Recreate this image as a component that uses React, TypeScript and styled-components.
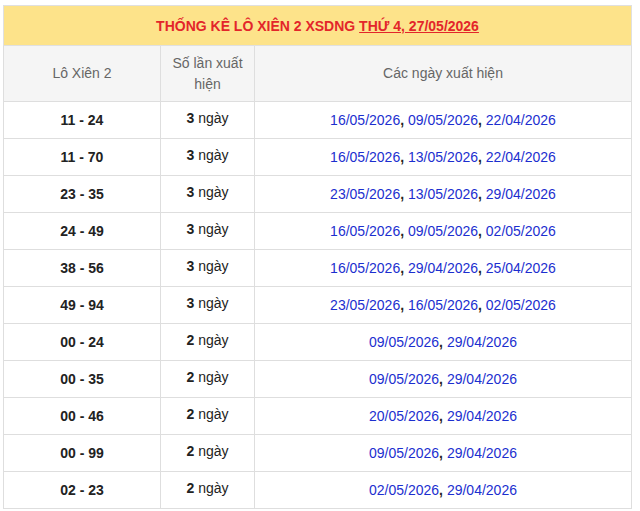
import styled, { createGlobalStyle } from "styled-components";

const Global = createGlobalStyle`
  body { margin: 0; background: #fff; font-family: "Liberation Sans", Arial, sans-serif; }
`;

const rows: [string, number, string[]][] = [
  ["11 - 24", 3, ["16/05/2026", "09/05/2026", "22/04/2026"]],
  ["11 - 70", 3, ["16/05/2026", "13/05/2026", "22/04/2026"]],
  ["23 - 35", 3, ["23/05/2026", "13/05/2026", "29/04/2026"]],
  ["24 - 49", 3, ["16/05/2026", "09/05/2026", "02/05/2026"]],
  ["38 - 56", 3, ["16/05/2026", "29/04/2026", "25/04/2026"]],
  ["49 - 94", 3, ["23/05/2026", "16/05/2026", "02/05/2026"]],
  ["00 - 24", 2, ["09/05/2026", "29/04/2026"]],
  ["00 - 35", 2, ["09/05/2026", "29/04/2026"]],
  ["00 - 46", 2, ["20/05/2026", "29/04/2026"]],
  ["00 - 99", 2, ["09/05/2026", "29/04/2026"]],
  ["02 - 23", 2, ["02/05/2026", "29/04/2026"]],
];

const Wrap = styled.div`
  padding: 5px 8px 0 3px;
`;

const Table = styled.table`
  width: 629px;
  border-collapse: collapse;
  table-layout: fixed;
  font-size: 14px;
`;

const Title = styled.th`
  height: 39px;
  background: #fde38a;
  color: #e3262a;
  font-size: 14px;
  font-weight: bold;
  border: 1px solid #e0e0e0;
  padding: 0;
  u { text-decoration: underline; }
`;

const Head = styled.th`
  height: 55px;
  background: #f5f5f5;
  color: #666;
  font-weight: normal;
  font-size: 14px;
  line-height: 21px;
  border: 1px solid #dedede;
  padding: 0 8px;
`;

const Cell = styled.td<{ $bold?: boolean }>`
  height: 36px;
  border: 1px solid #dedede;
  text-align: center;
  padding: 0;
  color: #222;
  font-weight: ${(p) => (p.$bold ? "bold" : "normal")};
`;

const Count = styled.span`
  position: relative;
  top: -2px;
  b { font-weight: bold; }
`;

const Date = styled.span`
  color: #1c2fcf;
`;

const Comma = styled.b`
  color: #222;
`;

export default function App() {
  return (
    <Wrap>
      <Global />
      <Table>
        <colgroup>
          <col style={{ width: 157 }} />
          <col style={{ width: 94 }} />
          <col />
        </colgroup>
        <thead>
          <tr>
            <Title colSpan={3}>
              THỐNG KÊ LÔ XIÊN 2 XSDNG <u>THỨ 4, 27/05/2026</u>
            </Title>
          </tr>
          <tr>
            <Head>Lô Xiên 2</Head>
            <Head>Số lần xuất hiện</Head>
            <Head>Các ngày xuất hiện</Head>
          </tr>
        </thead>
        <tbody>
          {rows.map(([pair, n, dates]) => (
            <tr key={pair}>
              <Cell $bold>{pair}</Cell>
              <Cell>
                <Count>
                  <b>{n}</b> ngày
                </Count>
              </Cell>
              <Cell>
                {dates.map((d, i) => (
                  <span key={d + i}>
                    {i > 0 && <Comma>, </Comma>}
                    <Date>{d}</Date>
                  </span>
                ))}
              </Cell>
            </tr>
          ))}
        </tbody>
      </Table>
    </Wrap>
  );
}
